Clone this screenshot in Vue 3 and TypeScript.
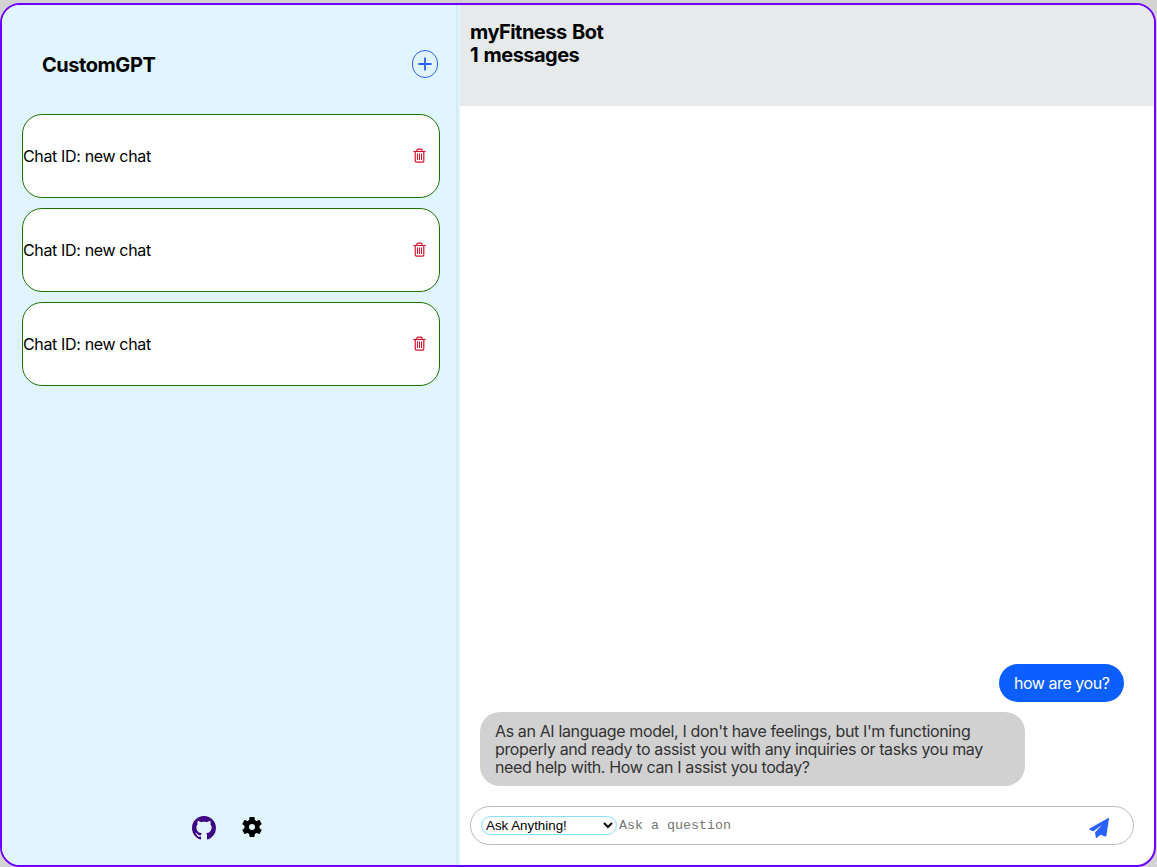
<script setup lang="ts">
import { ref } from 'vue'

interface Chat { id: number; label: string }

const chats = ref<Chat[]>([
  { id: 1, label: 'new chat' },
  { id: 2, label: 'new chat' },
  { id: 3, label: 'new chat' },
])
const mode = ref('Ask Anything!')
const question = ref('')

function addChat() {
  chats.value.push({ id: Date.now(), label: 'new chat' })
}
function removeChat(id: number) {
  chats.value = chats.value.filter((c) => c.id !== id)
}
</script>

<template>
  <div class="app">
    <aside class="sidebar">
      <div class="brand">
        <h1 class="title">CustomGPT</h1>
        <button class="add" aria-label="New chat" @click="addChat">
          <svg width="14" height="14" viewBox="0 0 14 14"><path d="M7 .4v13.200M.4 7h13.200" stroke="currentColor" stroke-width="1.8" /></svg>
        </button>
      </div>
      <div class="chats">
        <div v-for="chat in chats" :key="chat.id" class="chat">
          <span class="chat-label">Chat ID: {{ chat.label }}</span>
          <button class="trash" aria-label="Delete chat" @click="removeChat(chat.id)">
            <svg width="14" height="16" viewBox="0 0 14 16" fill="none" stroke="currentColor">
              <path d="M.4 3.500H12.600" stroke-width="1.2" />
              <path d="M3.900 3.400V2.200Q3.900 1.100 5 1.100H8Q9.100 1.100 9.100 2.200V3.400M2.200 3.700V12.700Q2.200 14.100 3.500 14.100H9.500Q10.800 14.100 10.800 12.700V3.700" stroke-width="1.2" />
              <path d="M4.500 5.500V12M6.500 5.500V12M8.500 5.500V12" stroke-width="1" />
            </svg>
          </button>
        </div>
      </div>
      <footer class="links">
        <svg class="github" width="24" height="24" viewBox="0 0 16 16"><path fill="currentColor" d="M8 0C3.58 0 0 3.58 0 8c0 3.54 2.29 6.53 5.47 7.59.4.07.55-.17.55-.38 0-.19-.01-.82-.01-1.49-2.01.37-2.53-.49-2.69-.94-.09-.23-.48-.94-.82-1.13-.28-.15-.68-.52-.01-.53.63-.01 1.08.58 1.23.82.72 1.21 1.87.87 2.33.66.07-.52.28-.87.51-1.07-1.78-.2-3.64-.89-3.64-3.95 0-.87.31-1.59.82-2.15-.08-.2-.36-1.02.08-2.12 0 0 .67-.21 2.2.82.64-.18 1.32-.27 2-.27s1.36.09 2 .27c1.53-1.04 2.2-.82 2.2-.82.44 1.1.16 1.92.08 2.12.51.56.82 1.27.82 2.15 0 3.07-1.87 3.75-3.65 3.95.29.25.54.73.54 1.48 0 1.07-.01 1.93-.01 2.2 0 .21.15.46.55.38A8.01 8.01 0 0 0 16 8c0-4.42-3.58-8-8-8z" /></svg>
        <svg class="gear" width="24" height="24" viewBox="0 0 24 24"><path d="M19.43 12.98c.04-.32.07-.64.07-.98s-.03-.66-.07-.98l2.11-1.65c.19-.15.24-.42.12-.64l-2-3.46c-.12-.22-.39-.3-.61-.22l-2.49 1c-.52-.4-1.08-.73-1.69-.98l-.38-2.65C14.46 2.18 14.25 2 14 2h-4c-.25 0-.46.18-.49.42l-.38 2.65c-.61.25-1.17.59-1.69.98l-2.49-1c-.23-.09-.49 0-.61.22l-2 3.46c-.13.22-.07.49.12.64l2.11 1.65c-.04.32-.07.65-.07.98s.03.66.07.98l-2.11 1.65c-.19.15-.24.42-.12.64l2 3.46c.12.22.39.3.61.22l2.49-1c.52.4 1.08.73 1.69.98l.38 2.65c.03.24.24.42.49.42h4c.25 0 .46-.18.49-.42l.38-2.65c.61-.25 1.17-.59 1.69-.98l2.49 1c.23.09.49 0 .61-.22l2-3.46c.12-.22.07-.49-.12-.64l-2.11-1.65zM12 15a3 3 0 1 1 0-6 3 3 0 0 1 0 6z" /></svg>
      </footer>
    </aside>

    <main class="main">
      <header class="header">
        <div>myFitness Bot</div>
        <div>1 messages</div>
      </header>
      <section class="messages">
        <div class="bubble user">how are you?</div>
        <div class="bubble bot">
          As an AI language model, I don't have feelings, but I'm functioning<br />
          properly and ready to assist you with any inquiries or tasks you may<br />
          need help with. How can I assist you today?
        </div>
      </section>
      <form class="composer" @submit.prevent>
        <select v-model="mode" class="mode">
          <option>Ask Anything!</option>
        </select>
        <input v-model="question" class="question" placeholder="Ask a question" />
        <button class="send" aria-label="Send">
          <svg width="22" height="22" viewBox="0 0 22 22"><path fill="currentColor" d="M20.200 1.100Q21.100.7 21 1.700L18.400 18.700Q18.200 19.900 17.100 19.400L12.600 17.700 8.900 20.700Q7.900 21.300 7.700 20.200L7.100 15.300 14 8 5.500 14.200 1.800 13Q.600 12.300 1.700 11.600Z" /></svg>
        </button>
      </form>
    </main>
  </div>
</template>

<style>
body {
  background: #d3d3d3;
  overflow: hidden;
}
</style>

<style scoped>
.app {
  box-sizing: border-box;
  width: 1156px;
  height: 864px;
  margin-top: 3px;
  display: flex;
  overflow: hidden;
  background: #fff;
  border: 2px solid #6f00ff;
  border-radius: 20px;
  font-family: Inter, "Liberation Sans", sans-serif;
  color: #000;
}
button {
  padding: 0;
  border: 0;
  background: none;
  display: flex;
  align-items: center;
  justify-content: center;
}
svg { display: block; }
.sidebar {
  box-sizing: border-box;
  width: 458px;
  flex: none;
  display: flex;
  flex-direction: column;
  padding: 45px 20px 25px 20px;
  background: #e1f5fe;
  box-shadow: inset -2px 0 #e1f5fe, inset -4px 0 #d5ecf6;
}
.brand {
  display: flex;
  justify-content: space-between;
  height: 28px;
  padding: 0 2px 0 20px;
}
.title {
  margin: 0;
  font-size: 20px;
  line-height: 30px;
  font-weight: 700;
  letter-spacing: -0.46px;
}
.add {
  box-sizing: border-box;
  width: 26px;
  height: 28px;
  border: 1px solid #2962ff;
  border-radius: 13px;
  color: #2962ff;
}
.chats {
  flex: 1;
  display: flex;
  flex-direction: column;
  gap: 10px;
  margin-top: 36px;
}
.chat {
  box-sizing: border-box;
  height: 84px;
  display: flex;
  align-items: center;
  justify-content: space-between;
  padding-right: 12px;
  background: #fff;
  border: 1px solid #1b7300;
  border-radius: 20px;
}
.chat-label {
  font-size: 16px;
  letter-spacing: -0.35px;
}
.trash { color: #d9102c; }
.links {
  display: flex;
  gap: 24px;
  padding-left: 170px;
}
.github { color: #3f0083; margin-top: 1px; }
.main {
  flex: 1;
  display: flex;
  flex-direction: column;
}
.header {
  box-sizing: border-box;
  height: 101px;
  padding: 16px 10px;
  background: #e6eaea;
  font-size: 20px;
  line-height: 23px;
  font-weight: 700;
  letter-spacing: -0.52px;
  word-spacing: 1.2px;
}
.messages {
  flex: 1;
  display: flex;
  flex-direction: column;
  justify-content: flex-end;
  gap: 10px;
  padding: 0 30px 20px 20px;
}
.bubble {
  box-sizing: border-box;
  padding: 10px 15px;
  border-radius: 20px;
  font-size: 16px;
  line-height: 18px;
  letter-spacing: -0.37px;
  white-space: nowrap;
}
.user {
  align-self: flex-end;
  width: 125px;
  letter-spacing: -0.45px;
  background: #0b5fff;
  color: #fff;
}
.bot {
  align-self: flex-start;
  width: 545px;
  background: #d1d1d1;
  color: #333;
}
.composer {
  box-sizing: border-box;
  height: 39px;
  margin: 0 20px 20px 10px;
  padding: 0 23px 0 10px;
  display: flex;
  align-items: center;
  border: 1px solid #bbb;
  border-radius: 20px;
}
.mode {
  box-sizing: border-box;
  width: 136px;
  height: 19px;
  padding: 0;
  border: 1px solid #87dfff;
  border-radius: 10px;
  background: #fff;
  color: #000;
  font: 13.333px "Liberation Sans", sans-serif;
}
.question {
  flex: 1;
  min-width: 0;
  padding: 0 2px;
  border: 0;
  outline: 0;
  background: none;
  font: 13.333px "Liberation Mono", monospace;
}
.question::placeholder { color: #757575; }
.send {
  color: #2962ff;
  margin-top: 5px;
}
</style>
